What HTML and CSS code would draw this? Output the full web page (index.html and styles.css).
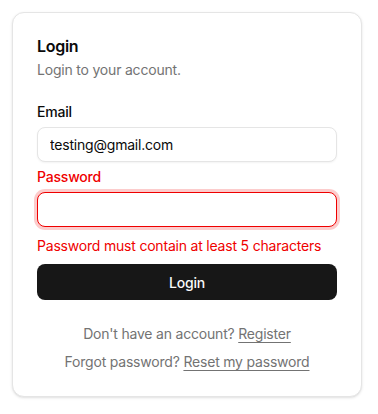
FILE: index.html
```html
<!DOCTYPE html>
<html lang="en">
<head>
<meta charset="utf-8">
<title>Login</title>
<link rel="stylesheet" href="styles.css">
</head>
<body>
<div class="card">
  <div class="header">
    <h1 class="title">Login</h1>
    <p class="subtitle">Login to your account.</p>
  </div>
  <form class="form">
    <div class="field">
      <label class="label" for="email">Email</label>
      <input class="input" id="email" type="email" value="testing@gmail.com">
    </div>
    <div class="field">
      <label class="label error" for="password">Password</label>
      <input class="input input-error" id="password" type="password">
      <p class="message">Password must contain at least 5 characters</p>
    </div>
    <button class="button" type="button">Login</button>
  </form>
  <div class="footer">
    <p>Don't have an account? <a href="#">Register</a></p>
    <p>Forgot password? <a href="#">Reset my password</a></p>
  </div>
</div>
</body>
</html>
```

FILE: styles.css
```css
* { box-sizing: border-box; }
html, body { margin: 0; padding: 0; background: #ffffff; }
body {
  font-family: Inter, "Liberation Sans", sans-serif;
  color: #0a0a0a;
  padding: 12px;
  letter-spacing: -0.2px;
}
.card {
  width: 350px;
  border: 1px solid #e5e5e5;
  border-radius: 12px;
  background: #fff;
  box-shadow: 0 1px 3px rgba(0,0,0,0.1), 0 1px 2px -1px rgba(0,0,0,0.1);
  padding: 24px;
}
.header { display: flex; flex-direction: column; gap: 6px; }
.title {
  margin: 0;
  font-size: 16px;
  line-height: 16px;
  font-weight: 600;
  letter-spacing: -0.3px;
  padding-top: 1px;
}
.subtitle {
  margin: 0;
  font-size: 14px;
  line-height: 20px;
  color: #737373;
}
.form {
  display: flex;
  flex-direction: column;
  gap: 8px;
  margin-top: 25px;
}
.field { display: flex; flex-direction: column; gap: 8px; }
.label {
  font-size: 14px;
  line-height: 14px;
  font-weight: 500;
}
.label.error { color: #ef0000; }
.input {
  height: 35px;
  width: 100%;
  border: 1px solid #e5e5e5;
  border-radius: 8px;
  padding: 0 12px;
  font-family: inherit;
  font-size: 14px;
  letter-spacing: -0.2px;
  color: #0a0a0a;
  background: #fff;
  box-shadow: 0 1px 2px rgba(0,0,0,0.05);
  outline: none;
}
.input-error {
  border-color: #ef0000;
  box-shadow: 0 0 0 3px rgba(239, 0, 0, 0.2);
}
.message {
  margin: 1px 0 0;
  font-size: 14px;
  line-height: 20px;
  color: #ef0000;
}
.button {
  height: 36px;
  border: none;
  border-radius: 8px;
  background: #171717;
  color: #fafafa;
  font-family: inherit;
  font-size: 14px;
  font-weight: 500;
  letter-spacing: -0.2px;
}
.footer {
  margin-top: 24px;
  display: flex;
  flex-direction: column;
  gap: 8px;
  text-align: center;
  font-size: 14px;
  line-height: 20px;
  color: #737373;
}
.footer p { margin: 0; }
.footer a { color: #737373; text-decoration: underline; text-underline-offset: 3px; }
```
